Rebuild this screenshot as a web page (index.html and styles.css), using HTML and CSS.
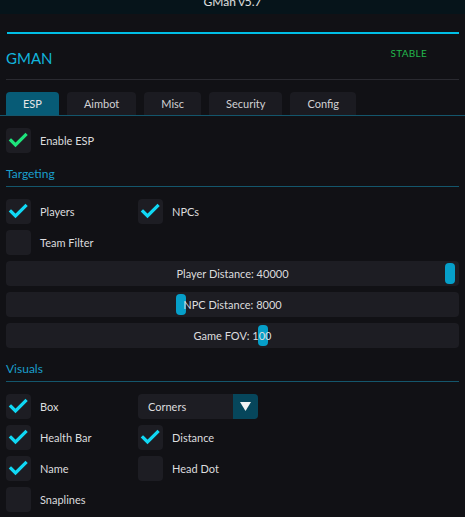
FILE: index.html
```html
<!DOCTYPE html>
<html>
<head>
<meta charset="utf-8">
<link rel="stylesheet" href="styles.css">
</head>
<body>
<div class="titlebar"><span>GMan v5.7</span></div>
<div class="accent"></div>
<div class="header">
  <div class="brand">GMAN</div>
  <div class="status">STABLE</div>
</div>
<div class="divider"></div>
<div class="tabs">
  <div class="tab active">ESP</div>
  <div class="tab">Aimbot</div>
  <div class="tab">Misc</div>
  <div class="tab">Security</div>
  <div class="tab">Config</div>
</div>
<div class="content">
  <div class="row">
    <div class="check"><div class="box on green"><svg viewBox="0 0 25 25"><polyline points="5,12.5 9.5,17 19.5,7"/></svg></div><span>Enable ESP</span></div>
  </div>
  <div class="heading">Targeting</div>
  <div class="grid">
    <div class="check"><div class="box on"><svg viewBox="0 0 25 25"><polyline points="5,12.5 9.5,17 19.5,7"/></svg></div><span>Players</span></div>
    <div class="check"><div class="box on"><svg viewBox="0 0 25 25"><polyline points="5,12.5 9.5,17 19.5,7"/></svg></div><span>NPCs</span></div>
    <div class="check"><div class="box"></div><span>Team Filter</span></div>
  </div>
  <div class="slider"><div class="knob" style="left:439px"></div><span>Player Distance: 40000</span></div>
  <div class="slider"><div class="knob" style="left:170px"></div><span>NPC Distance: 8000</span></div>
  <div class="slider"><div class="knob" style="left:252px"></div><span>Game FOV: 100</span></div>
  <div class="heading">Visuals</div>
  <div class="grid">
    <div class="check"><div class="box on"><svg viewBox="0 0 25 25"><polyline points="5,12.5 9.5,17 19.5,7"/></svg></div><span>Box</span></div>
    <div class="select"><span>Corners</span><div class="arrow"><svg viewBox="0 0 25 25"><polygon points="7,8 18,8 12.5,17"/></svg></div></div>
    <div class="check"><div class="box on"><svg viewBox="0 0 25 25"><polyline points="5,12.5 9.5,17 19.5,7"/></svg></div><span>Health Bar</span></div>
    <div class="check"><div class="box on"><svg viewBox="0 0 25 25"><polyline points="5,12.5 9.5,17 19.5,7"/></svg></div><span>Distance</span></div>
    <div class="check"><div class="box on"><svg viewBox="0 0 25 25"><polyline points="5,12.5 9.5,17 19.5,7"/></svg></div><span>Name</span></div>
    <div class="check"><div class="box"></div><span>Head Dot</span></div>
    <div class="check"><div class="box"></div><span>Snaplines</span></div>
  </div>
</div>
</body>
</html>
```
FILE: styles.css
```css
html, body {
  margin: 0;
  padding: 0;
  background: #111115;
  color: #dcdcde;
  font-family: Lato, "Noto Sans", sans-serif;
  font-size: 11px;
  overflow: hidden;
}
.titlebar {
  height: 14px;
  background: #06141a;
  overflow: hidden;
  text-align: center;
  color: #e0e0e0;
  font-size: 12px;
}
.titlebar span {
  display: block;
  line-height: 14px;
  margin-top: -5px;
}
.accent {
  margin: 18px 6px 0 7px;
  height: 2px;
  background: #00bfe6;
}
.header {
  display: flex;
  justify-content: space-between;
  align-items: flex-start;
  height: 45px;
  margin: 0 6px;
  padding-right: 32px;
}
.brand {
  color: #12b4dc;
  font-size: 15px;
  line-height: 20px;
  margin-top: 14px;
}
.status {
  color: #22b84c;
  font-size: 10px;
  line-height: 14px;
  margin-top: 12px;
  letter-spacing: 0.3px;
}
.divider {
  margin: 0 6px;
  height: 1px;
  background: #2a2a30;
}
.tabs {
  display: flex;
  gap: 8px;
  margin-top: 12px;
  padding: 0 6px;
  border-bottom: 1px solid #14566c;
}
.tab {
  height: 23px;
  line-height: 23px;
  padding: 0 17px;
  background: #1b1b21;
  border-radius: 4px 4px 0 0;
  color: #d2d2d4;
}
.tab.active {
  background: #075b76;
  color: #e6e6e6;
}
.content {
  display: flex;
  flex-direction: column;
  gap: 6px;
  padding: 12px 6px 0 6px;
}
.grid {
  display: grid;
  grid-template-columns: 132px 1fr;
  row-gap: 6px;
}
.check {
  display: flex;
  align-items: center;
  gap: 9px;
  height: 25px;
}
.box {
  width: 25px;
  height: 25px;
  border-radius: 4px;
  background: #1d1d23;
  flex: none;
}
.box svg {
  width: 25px;
  height: 25px;
  display: block;
}
.box polyline {
  fill: none;
  stroke: #10d8f4;
  stroke-width: 3.2;
  stroke-linecap: square;
  stroke-linejoin: miter;
}
.box.green polyline {
  stroke: #1ee47c;
}
.heading {
  color: #1a9fcc;
  font-size: 12px;
  line-height: 14px;
  padding-top: 8px;
  padding-bottom: 5px;
  border-bottom: 1px solid #14566c;
  margin-bottom: 6px;
}
.slider {
  position: relative;
  height: 25px;
  line-height: 25px;
  text-align: center;
  background: #1d1d23;
  border-radius: 4px;
}
.slider span {
  position: relative;
}
.knob {
  position: absolute;
  top: 2px;
  width: 10px;
  height: 21px;
  border-radius: 4px;
  background: #069fc9;
}
.select {
  display: flex;
  width: 120px;
  height: 25px;
  border-radius: 4px;
  background: #1d1d23;
  overflow: hidden;
}
.select span {
  flex: 1;
  line-height: 25px;
  padding-left: 10px;
}
.arrow {
  width: 25px;
  height: 25px;
  background: #06465b;
}
.arrow svg {
  width: 25px;
  height: 25px;
  display: block;
}
.arrow polygon {
  fill: #f2f2f2;
}
```
